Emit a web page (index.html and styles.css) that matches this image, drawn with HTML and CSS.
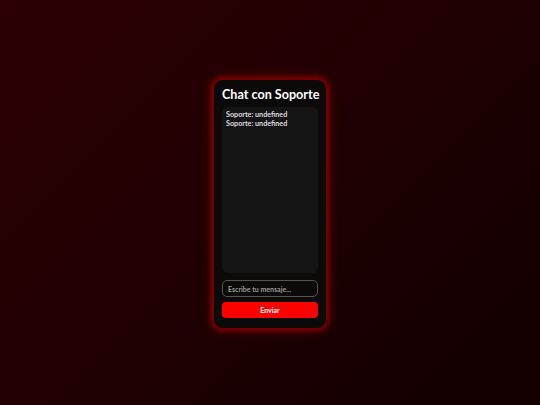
FILE: index.html
```html
<!DOCTYPE html>
<html lang="es">
<head>
<meta charset="utf-8">
<title>Chat con Soporte</title>
<link rel="stylesheet" href="styles.css">
</head>
<body>
<div class="page">
  <div class="chat">
    <h1 class="title">Chat con Soporte</h1>
    <div class="messages">
      <div class="msg">Soporte: undefined</div>
      <div class="msg">Soporte: undefined</div>
    </div>
    <input class="input" type="text" placeholder="Escribe tu mensaje...">
    <button class="send">Enviar</button>
  </div>
</div>
</body>
</html>
```
FILE: styles.css
```css
html, body {
  margin: 0;
  padding: 0;
  height: 100%;
}
body {
  background: linear-gradient(135deg, #2c0003 0%, #1f0002 50%, #120001 100%);
  font-family: "Lato", "Noto Sans", sans-serif;
}
.page {
  height: 100%;
  display: flex;
  justify-content: center;
  padding-top: 79px;
  box-sizing: border-box;
}
.chat {
  width: 114px;
  height: 250px;
  box-sizing: border-box;
  padding: 7px 8px 10px;
  background: #0c0909;
  border: 1.5px solid #6e0000;
  border-radius: 10px;
  box-shadow: 0 0 5px 2px rgba(255, 0, 0, 0.4), 0 0 12px 3px rgba(200, 0, 0, 0.2);
  display: flex;
  flex-direction: column;
}
.title {
  margin: 0 0 4px;
  color: #fff;
  font-size: 12.6px;
  font-weight: 700;
  line-height: 16px;
  text-align: center;
  white-space: nowrap;
}
.messages {
  flex: 1;
  background: #141414;
  border-radius: 5px;
  padding: 3px 4px;
}
.msg {
  color: #dedede;
  font-size: 7.2px;
  font-weight: 700;
  line-height: 9px;
}
.input {
  margin-top: 7px;
  height: 17px;
  box-sizing: border-box;
  border: 1px solid #555;
  border-radius: 5px;
  background: #0c0909;
  color: #ddd;
  font-family: inherit;
  font-size: 7px;
  padding: 0 5px;
  outline: none;
}
.input::placeholder {
  color: #9a9a9a;
  font-weight: 700;
}
.send {
  margin-top: 5px;
  height: 16px;
  border: none;
  border-radius: 4px;
  background: #ff0000;
  color: #fff;
  font-family: inherit;
  font-weight: 700;
  font-size: 7px;
  padding: 0;
}
```
